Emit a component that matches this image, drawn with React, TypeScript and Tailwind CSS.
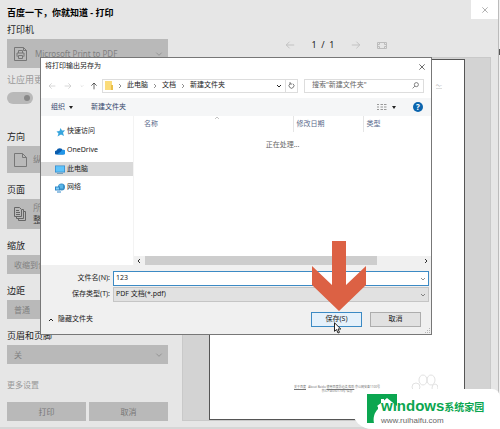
import { JSX, ReactNode } from "react";

type IconProps = { d: string; className?: string };

function Stroke({ d, className = "" }: IconProps): JSX.Element {
  return (
    <svg viewBox="0 0 12 12" fill="none" stroke="currentColor" className={`shrink-0 ${className}`}>
      <path d={d} />
    </svg>
  );
}

const LEFT = "M11 6H1.5M5.5 2 1.5 6l4 4";
const RIGHT = "M1 6h9.5M6.5 2l4 4-4 4";
const DOWN = "M2 4l4 4 4-4";
const UP = "M2 8l4-4 4 4";
const CROSS = "M2 2l8 8M10 2l-8 8";
const CHEVRON_RIGHT = "M4 2l4 4-4 4";
const CHEVRON_LEFT = "M8 2 4 6l4 4";

function PrinterIcon(): JSX.Element {
  return (
    <svg viewBox="0 0 13 16" fill="none" stroke="#777" className="h-4 w-[13px] shrink-0">
      <path d="M.5 1.500h9l3 3v10H.5z" />
      <path d="M9.500 1.500v3h3M4.500 7V4.500h4V7M3.500 10.500H3V7h7v3.500h-.5M4.500 9.500h4v3h-4z" />
    </svg>
  );
}

function PageIcon(): JSX.Element {
  return (
    <svg viewBox="0 0 13 16" fill="none" stroke="#777" className="h-4 w-[13px] shrink-0">
      <path d="M.5 1.500h8l4 4v9H.5zM8.500 1.500v4h4" />
    </svg>
  );
}

function PagesIcon(): JSX.Element {
  return (
    <svg viewBox="0 0 13 16" fill="none" stroke="#666" className="h-4 w-[13px] shrink-0">
      <path d="M.5 1.500h5l2 2v7h-7zM2 4.500h3M2 6.500h4M2 8.500h4M8 3.500h1.500v9h-7V11M10 5.500h1.500v9h-7V13" />
    </svg>
  );
}

function PrintSelect({
  id,
  label,
  value,
  className,
  children,
}: {
  id: string;
  label: string;
  value: string;
  className: string;
  children?: ReactNode;
}): JSX.Element {
  return (
    <div className="flex flex-col">
      <label htmlFor={id} className="h-[15px] text-[9px] leading-3 text-[#222]">
        {label}
      </label>
      <div className={`flex items-center bg-[#b9b9b9] pr-[5px] pl-[7px] text-[#808080] ${className}`}>
        {children}
        <select id={id} disabled className="min-w-0 flex-1 appearance-none bg-transparent">
          <option>{value}</option>
        </select>
        <Stroke d={DOWN} className="h-2 w-2" />
      </div>
    </div>
  );
}

function PrintSettings(): JSX.Element {
  return (
    <form className="flex w-[168px] shrink-0 flex-col pt-[7px] pl-[7px]">
      <h1 className="mb-[5px] h-3 text-[9px] leading-3 font-bold text-black">百度一下，你就知道 - 打印</h1>
      <PrintSelect id="printer" label="打印机" value="Microsoft Print to PDF" className="h-[29px] text-[8px]">
        <span className="mr-2">
          <PrinterIcon />
        </span>
      </PrintSelect>
      <label htmlFor="app-change" className="mt-1 h-4 text-[9px] leading-4 text-[#999]">
        让应用更改我的打印首选项
      </label>
      <span className="mt-1 mb-[27px] flex h-3 w-[26px] items-center justify-end rounded-full bg-[#b9b9b9] pr-[3px]">
        <input
          id="app-change"
          type="checkbox"
          defaultChecked
          disabled
          className="h-[6px] w-[6px] appearance-none rounded-full bg-[#888]"
        />
      </span>
      <PrintSelect id="orientation" label="方向" value="纵向" className="h-[27px] text-[9px]">
        <span className="mr-[6px]">
          <PageIcon />
        </span>
      </PrintSelect>
      <div className="mt-[11px] flex flex-col">
        <label htmlFor="pages" className="h-[15px] text-[9px] leading-3 text-[#222]">
          页面
        </label>
        <div className="flex h-[30px] items-center bg-[#b9b9b9] pl-[7px]">
          <PagesIcon />
          <div className="ml-[6px] text-[9px] leading-3 text-[#888]">
            <select id="pages" disabled className="block appearance-none">
              <option>所有</option>
            </select>
            <span className="block text-[#444]">整个文档</span>
          </div>
        </div>
      </div>
      <div className="mt-[11px] flex flex-col gap-[11px]">
        <PrintSelect id="scale" label="缩放" value="收缩到合适大小" className="h-[19px] text-[8px]" />
        <PrintSelect id="margin" label="边距" value="普通" className="h-[19px] text-[8px]" />
        <PrintSelect id="header-footer" label="页眉和页脚" value="关" className="h-[19px] text-[8px]" />
      </div>
      <a href="#more" className="mt-[15px] mb-[11px] h-3 text-[8px] leading-3 text-[#999]">
        更多设置
      </a>
      <div className="grid grid-cols-2 gap-[3px] text-[8px] text-[#777]">
        <button type="button" disabled className="h-[19px] bg-[#b9b9b9]">
          打印
        </button>
        <button type="button" disabled className="h-[19px] bg-[#b9b9b9]">
          取消
        </button>
      </div>
    </form>
  );
}

function Preview(): JSX.Element {
  return (
    <div className="ml-[14px] flex min-w-0 flex-1 flex-col">
      <div className="flex h-[57px] items-end pb-[6px] pl-[103px] text-[#bcbcbc]">
        <Stroke d={LEFT} className="h-3 w-[10px]" />
        <span className="mx-4 w-6 text-center text-[9px] leading-3 whitespace-nowrap text-[#222]">1&nbsp; / &nbsp;1</span>
        <Stroke d={RIGHT} className="h-3 w-[10px]" />
        <svg viewBox="0 0 10 12" fill="none" stroke="currentColor" className="ml-4 h-3 w-[10px]">
          <path d="M.5 3.500h9v6h-9zM2.500 4v1.500H1M7.500 4v1.500H9M2.500 9V7.500H1M7.500 9V7.500H9" />
        </svg>
      </div>
      <div className="flex h-[364px] border border-[#c9c9c9] bg-[#d3d3d3] pt-px pr-[25px] pl-[26px]">
        <div className="flex min-w-0 flex-1 flex-col border border-[#555] bg-white">
          <div className="mt-[23px] mr-[22px] self-end border-b border-[#ddd] text-[5px] leading-[5px] text-[#aaa]">～·</div>
          <div className="mt-auto mb-[26px] flex flex-col items-center text-[3px] leading-[4px] text-[#777]">
            <p>
              <a href="#about" className="underline">关于百度</a> &nbsp; About Baidu{" "}
              <a href="#terms" className="underline">使用百度前必读 帮助</a> 京公网安备1100号
            </p>
            <p>京ICP证030173号 信息</p>
          </div>
        </div>
      </div>
    </div>
  );
}

function FolderIcon(): JSX.Element {
  return (
    <svg viewBox="0 0 8 11" className="h-[11px] w-2 shrink-0">
      <path d="M0 1h7v9H0z" fill="#fbdc7b" />
      <path d="M6 5h2v5H6z" fill="#eabf4a" />
    </svg>
  );
}

function AddressBar(): JSX.Element {
  return (
    <div className="flex h-[25px] items-center pr-[7px] pl-[7px] text-[7px] text-[#333]">
      <Stroke d={LEFT} className="h-2 w-2 text-[#c4c4c4]" />
      <Stroke d={RIGHT} className="ml-2 h-2 w-2 text-[#c4c4c4]" />
      <Stroke d={DOWN} className="ml-2 h-1 w-1 text-[#aaa]" />
      <Stroke d="M6 11V1.500M2 5.500l4-4 4 4" className="mr-1 ml-[6px] h-2 w-2 text-[#222]" />
      <nav
        aria-label="路径"
        className="flex h-[14px] min-w-0 flex-1 items-center border border-[#ddd] pl-[2px] whitespace-nowrap text-[#222]"
      >
        <FolderIcon />
        <Stroke d={CHEVRON_RIGHT} className="mx-1 h-[6px] w-[6px]" />
        <a href="#pc">此电脑</a>
        <Stroke d={CHEVRON_RIGHT} className="mx-1 h-[6px] w-[6px]" />
        <a href="#docs">文档</a>
        <Stroke d={CHEVRON_RIGHT} className="mx-1 h-[6px] w-[6px]" />
        <a href="#new">新建文件夹</a>
        <Stroke d={DOWN} className="mr-[3px] ml-auto h-[6px] w-[6px] stroke-2" />
        <button type="button" aria-label="刷新" className="flex h-full w-3 items-center justify-center border-l border-[#ddd]">
          <Stroke d="M8.500 3a4.200 4.200 0 1 1-5 0M3.500 0v3.500H7" className="h-[7px] w-[7px]" />
        </button>
      </nav>
      <div className="ml-[6px] flex h-[14px] w-[120px] items-center border border-[#ddd] pr-1 pl-[7px]">
        <input
          type="search"
          aria-label="搜索"
          placeholder={'搜索"新建文件夹"'}
          className="min-w-0 flex-1 placeholder:text-[#666]"
        />
        <Stroke d="M11 4.500a3.500 3.500 0 1 1-7 0a3.500 3.500 0 0 1 7 0M5 7 1 11" className="h-[7px] w-[7px]" />
      </div>
    </div>
  );
}

function Places(): JSX.Element {
  return (
    <ul className="w-[92px] shrink-0 pt-[6px] text-[7px] text-[#222]">
      <li className="flex h-[19px] items-center pl-[14px]">
        <svg viewBox="0 0 10 10" className="mr-[2px] h-[10px] w-[10px]">
          <path d="M5.500 1 7 3.500l3-.2-2 2.400L9 9 6 7.500 2.500 9.500 3.500 6.500 1.500 4.500l3-.5z" fill="#38a5dd" />
        </svg>
        <a href="#quick">快速访问</a>
      </li>
      <li className="flex h-[19px] items-center pl-[14px]">
        <svg viewBox="0 0 10 8" className="mr-[2px] h-2 w-[10px]">
          <path d="M2 7.500a2 2 0 0 1-.5-4A3.500 3.500 0 0 1 8 3.500a2 2 0 0 1 0 4z" fill="#0a5cad" />
          <path d="M2 7.500 6 4.500a2.400 2.400 0 1 1 2 3z" fill="#2196e8" />
        </svg>
        <a href="#onedrive">OneDrive</a>
      </li>
      <li className="mt-[2px] flex h-[14px] items-center bg-[#d9d9d9] pl-[14px]">
        <svg viewBox="0 0 10 9" className="mr-[2px] h-[9px] w-[10px]">
          <path d="M0 .5h10v7H0z" fill="#3187c8" />
          <path d="M.7 1.200h8.600v5.500H.7z" fill="#5fc3fa" />
          <path d="M2 8h6v1H2z" fill="#7a9fb8" />
        </svg>
        <a href="#pc">此电脑</a>
      </li>
      <li className="mt-[2px] flex h-[19px] items-center pl-[14px]">
        <svg viewBox="0 0 10 10" className="mr-[2px] h-[10px] w-[10px]">
          <circle cx="6.500" cy="4" r="3.500" fill="#3a8fc6" />
          <path d="M4 1.500h4v4H4z" fill="#58b5e8" />
          <path d="M0 3.500h5v4H0z" fill="#3187c8" />
          <path d="M1 4.500h3v2H1z" fill="#7fd0f8" />
          <path d="M2 8.500h4v1H2z" fill="#3187c8" />
        </svg>
        <a href="#network">网络</a>
      </li>
    </ul>
  );
}

function SaveDialog(): JSX.Element {
  return (
    <form
      role="dialog"
      aria-label="将打印输出另存为"
      className="absolute top-[57px] left-[40px] w-[392px] border border-[#777] bg-[#f0f0f0] text-[7px] text-[#222]"
    >
      <div className="bg-white">
        <div className="flex h-[15px] items-center justify-between pt-[2px] pr-[5px] pl-1">
          <h2>将打印输出另存为</h2>
          <button type="button" aria-label="关闭">
            <Stroke d={CROSS} className="h-2 w-2" />
          </button>
        </div>
        <AddressBar />
        <div className="flex h-[18px] items-center bg-[#f5f6f7] pr-2 pl-[10px] text-[#34476b]">
          <button type="button">组织</button>
          <svg viewBox="0 0 4 3" className="ml-1 h-[3px] w-1">
            <path d="M0 0h4L2 3z" fill="#222" />
          </svg>
          <button type="button" className="ml-[18px]">
            新建文件夹
          </button>
          <svg viewBox="0 0 10 8" className="ml-auto h-2 w-[10px]" fill="none" stroke="#999">
            <path d="M0 1.500h2M0 4h2M0 6.500h2M3.500 1.500H6M3.500 4H6M3.500 6.500H6M7 1.500h2.500M7 4h2.500M7 6.500h2.500" />
          </svg>
          <svg viewBox="0 0 4 3" className="ml-[5px] h-[3px] w-1">
            <path d="M0 0h4L2 3z" fill="#222" />
          </svg>
          <button
            type="button"
            className="ml-[17px] h-[10px] w-[10px] rounded-full bg-[#0a64ad] text-[8px] leading-[10px] font-bold text-white"
          >
            ?
          </button>
        </div>
        <div className="flex h-[149px]">
          <Places />
          <div className="flex min-w-0 flex-1 flex-col border-l border-[#f3f3f3]">
            <table className="w-full table-fixed text-left text-[#5b6b8c]">
              <thead>
                <tr className="h-4">
                  <th className="w-[159px] pl-[10px] font-normal">
                    <span className="relative">
                      名称
                      <Stroke d={UP} className="absolute -top-1 left-[70px] h-[6px] w-[6px] text-[#888]" />
                    </span>
                  </th>
                  <th className="w-[70px] border-l border-[#e5e5e5] pl-[3px] font-normal">修改日期</th>
                  <th className="border-l border-[#e5e5e5] pl-[3px] font-normal">类型</th>
                </tr>
              </thead>
              <tbody>
                <tr className="h-[26px]">
                  <td colSpan={3} className="text-center text-[#666]">
                    正在处理...
                  </td>
                </tr>
              </tbody>
            </table>
            <div className="mt-auto flex h-[9px] items-center bg-[#f0f0f0] pr-[2px] pl-[2px] text-[#333]">
              <Stroke d={CHEVRON_LEFT} className="mr-[3px] h-[6px] w-[6px] stroke-2" />
              <div className="mr-[46px] h-full flex-1 bg-[#cdcdcd]" />
              <Stroke d={CHEVRON_RIGHT} className="h-[6px] w-[6px] stroke-2" />
            </div>
          </div>
        </div>
      </div>
      <div className="grid grid-cols-[69px_1fr] gap-x-[3px] gap-y-px pt-[6px] pr-[2px] text-[#222]">
        <label htmlFor="file-name" className="self-center text-right">
          文件名(N):
        </label>
        <div className="flex h-[15px] items-center border border-[#3c8ac4] bg-white pr-[2px] pl-[2px]">
          <input id="file-name" defaultValue="123" autoFocus className="min-w-0 flex-1 outline-none" />
          <Stroke d={DOWN} className="h-[6px] w-[6px]" />
        </div>
        <label htmlFor="file-type" className="self-center text-right">
          保存类型(T):
        </label>
        <div className="flex h-[15px] items-center border border-[#c5c5c5] bg-[#e1e1e1] pr-[2px] pl-[2px]">
          <select id="file-type" className="min-w-0 flex-1 appearance-none">
            <option>PDF 文档(*.pdf)</option>
          </select>
          <Stroke d={DOWN} className="h-[6px] w-[6px]" />
        </div>
      </div>
      <div className="flex items-center pt-[10px] pr-[10px] pb-[7px] pl-[7px]">
        <button type="button" className="flex items-center gap-1">
          <Stroke d={UP} className="h-[6px] w-[6px] stroke-2" />
          隐藏文件夹
        </button>
        <button type="button" className="ml-auto h-[15px] w-[51px] border border-[#3c8ac4] bg-[#e5f1fb]">
          保存(S)
        </button>
        <button type="button" className="ml-2 h-[15px] w-[51px] border border-[#adadad] bg-[#e1e1e1]">
          取消
        </button>
      </div>
      <svg viewBox="0 0 6 6" className="absolute right-0 bottom-0 h-[6px] w-[6px]" fill="#b5b5b5">
        <path d="M4 0h1v1H4zM2 2h1v1H2zM4 2h1v1H4zM0 4h1v1H0zM2 4h1v1H2zM4 4h1v1H4z" />
      </svg>
    </form>
  );
}

function Brand(): JSX.Element {
  return (
    <footer className="absolute right-0 bottom-0 flex h-10 w-[148px] items-center rounded-l-[20px] rounded-tr-lg bg-white pl-[15px] font-['Liberation_Sans','Noto_Sans_CJK_SC',sans-serif]">
      <svg viewBox="0 0 30 30" className="h-[30px] w-[30px] shrink-0">
        <path d="M0 0h30v12L20 4l-3 2.500V5h-3v4l-4 3 1 1v2C7 19 6 24 7 29H0z" fill="#0ba650" />
      </svg>
      <div className="-ml-4 pt-[5px] whitespace-nowrap">
        <p className="text-[15px] leading-4 font-bold text-[#0ba650]">
          windows<span className="text-[10px]">系统家园</span>
        </p>
        <a href="#home" className="block text-[8px] leading-[9px] text-[#666]">
          www.ruihaifu.com
        </a>
      </div>
    </footer>
  );
}

export default function App(): JSX.Element {
  return (
    <main className="relative flex min-h-screen overflow-hidden bg-[#e6e6e6] pr-[9px] font-['Noto_Sans','Noto_Sans_CJK_SC',sans-serif]">
      <PrintSettings />
      <Preview />
      <button
        type="button"
        aria-label="关闭"
        className="absolute top-0 right-[2px] flex h-[19px] w-[27px] items-center justify-center bg-white text-[#888]"
      >
        <Stroke d={CROSS} className="h-2 w-2" />
      </button>
      <div className="absolute inset-x-0 bottom-0 h-[2px] bg-[#d6d6d6]" />
      <div className="absolute inset-y-0 right-0 w-[2px] border-l border-[#bbb] bg-[#f0f0f0] pt-[49px]">
        <div className="h-[6px] bg-[#555]" />
      </div>
      <SaveDialog />
      <svg viewBox="0 0 54 70" className="absolute top-[241px] left-[312px] h-[70px] w-[54px]" fill="#dc6144">
        <path d="M20 0h14v44l20-19v19L27 70 0 44V25l20 19z" />
      </svg>
      <svg viewBox="0 0 8 12" className="absolute top-[322px] left-[334px] h-3 w-2" fill="#fff" stroke="#222">
        <path d="M.5 .8v8.500l2-1.800 1.500 3.500 1.500-.7L4 7h2.800z" />
      </svg>
      <svg viewBox="0 0 30 16" className="absolute top-[374px] left-[408px] h-4 w-[30px]" fill="none" stroke="#e2e2e2">
        <ellipse cx="15" cy="6" rx="4" ry="5" />
        <ellipse cx="23" cy="6" rx="4" ry="5" />
        <ellipse cx="8" cy="13" rx="4" ry="4" />
        <ellipse cx="27" cy="14" rx="3" ry="4" />
      </svg>
      <Brand />
    </main>
  );
}
